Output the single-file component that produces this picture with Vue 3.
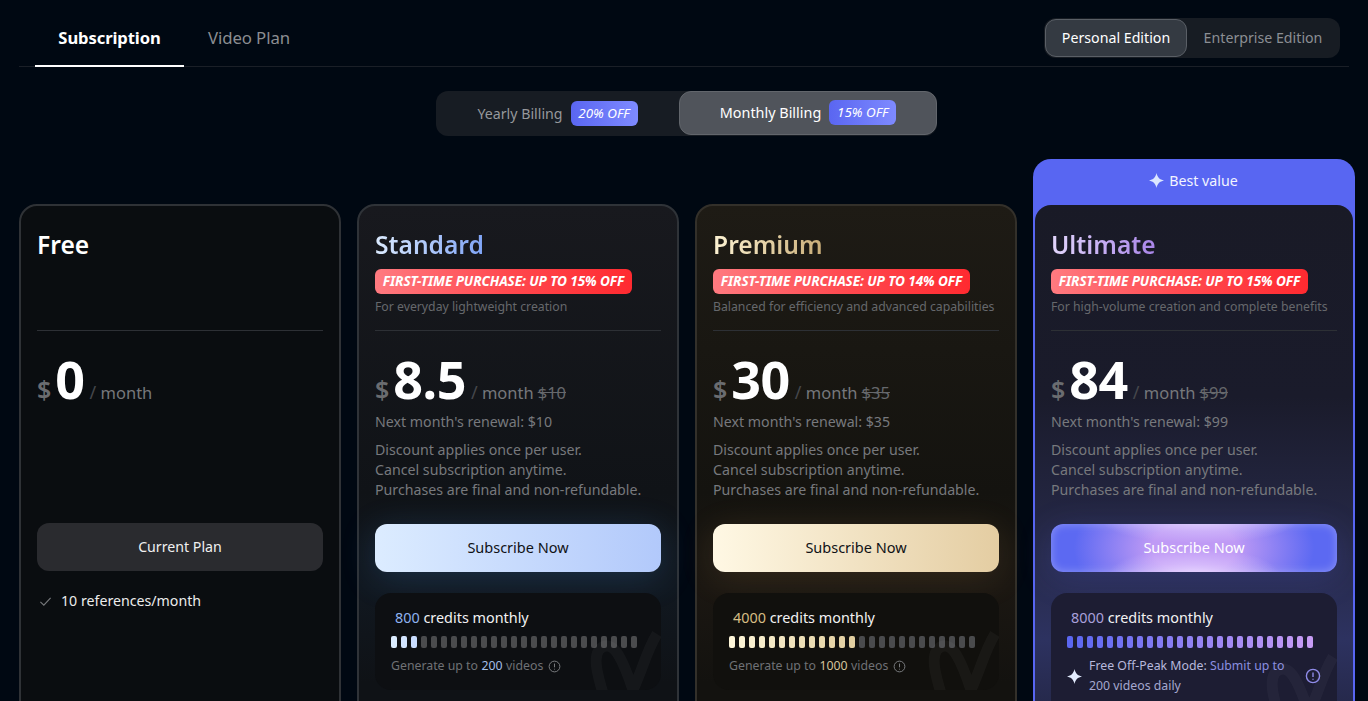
<script setup>
const plans = [
  { key: 'free', name: 'Free', price: '0', feature: '10 references/month' },
  {
    key: 'standard', name: 'Standard', off: 15, desc: 'For everyday lightweight creation', price: '8.5', old: 10,
    credits: 800, filled: 3, from: [219, 236, 255], to: [200, 220, 255], videos: 200,
  },
  {
    key: 'premium', name: 'Premium', off: 14, desc: 'Balanced for efficiency and advanced capabilities', price: '30', old: 35,
    credits: 4000, filled: 13, from: [253, 245, 216], to: [226, 207, 160], videos: 1000,
  },
  {
    key: 'ultimate', name: 'Ultimate', off: 15, desc: 'For high-volume creation and complete benefits', price: '84', old: 99,
    credits: 8000, filled: 25, from: [91, 103, 241], to: [199, 156, 245], offPeak: true,
  },
]

function barColor(plan, i) {
  if (i >= plan.filled) return '#4a4b4d'
  const t = plan.filled > 1 ? i / (plan.filled - 1) : 0
  const c = plan.from.map((v, k) => Math.round(v + (plan.to[k] - v) * t))
  return `rgb(${c.join(',')})`
}
</script>

<template>
  <div class="page">
    <header class="topbar">
      <nav class="tabs">
        <a class="tab active">Subscription</a>
        <a class="tab">Video Plan</a>
      </nav>
      <div class="edition">
        <span class="edition-item on">Personal Edition</span>
        <span class="edition-item">Enterprise Edition</span>
      </div>
    </header>

    <div class="billing">
      <div class="bill yearly">
        <span>Yearly Billing</span><em class="off">20% OFF</em>
      </div>
      <div class="bill monthly">
        <span>Monthly Billing</span><em class="off">15% OFF</em>
      </div>
    </div>

    <section class="plans">
      <article v-for="p in plans" :key="p.key" class="plan" :class="p.key">
        <div v-if="p.key === 'ultimate'" class="ribbon">
          <svg class="ribbon-star" viewBox="0 0 16 16"><path d="M8 0C8.9 4.6 11.4 7.1 16 8 11.4 8.9 8.9 11.4 8 16 7.1 11.4 4.6 8.9 0 8 4.6 7.1 7.1 4.6 8 0Z" /></svg>
          <span>Best value</span>
        </div>
        <div class="inner">
          <div class="head">
            <h2 class="name">{{ p.name }}</h2>
            <template v-if="p.off">
              <div class="promo">FIRST-TIME PURCHASE: UP TO {{ p.off }}% OFF</div>
              <p class="desc">{{ p.desc }}</p>
            </template>
          </div>

          <div class="price">
            <span class="cur">$</span><span class="num">{{ p.price }}</span>
            <span class="per"><i>/</i> month</span>
            <s v-if="p.old" class="old">${{ p.old }}</s>
          </div>

          <div class="terms">
            <template v-if="p.off">
              <p class="next">Next month's renewal: ${{ p.old }}</p>
              <p class="rules">Discount applies once per user.<br />Cancel subscription anytime.<br />Purchases are final and non-refundable.</p>
            </template>
          </div>

          <button class="cta">{{ p.key === 'free' ? 'Current Plan' : 'Subscribe Now' }}</button>

          <div v-if="p.feature" class="feature">
            <svg class="check" viewBox="0 0 14 14"><path d="M1.5 7.5 5.2 11 12.5 3.2" /></svg>
            <span>{{ p.feature }}</span>
          </div>

          <div v-else class="credits">
            <svg class="mark" viewBox="0 0 70 60"><path d="M14 70C6 44 2 28 8 20 14 13 22 15 28 26 34 36 38 48 42 60 52 38 56 20 66 4" /></svg>
            <div class="credit-line"><b>{{ p.credits }}</b> credits monthly</div>
            <div class="bars">
              <i v-for="n in 25" :key="n" :style="{ background: barColor(p, n - 1) }"></i>
            </div>
            <div v-if="p.offPeak" class="peak">
              <svg class="peak-star" viewBox="0 0 16 16"><path d="M8 0C8.9 4.6 11.4 7.1 16 8 11.4 8.9 8.9 11.4 8 16 7.1 11.4 4.6 8.9 0 8 4.6 7.1 7.1 4.6 8 0Z" /></svg>
              <span class="peak-text">Free Off-Peak Mode: <u>Submit up to</u><br /><u>200 videos daily</u></span>
              <svg class="info big" viewBox="0 0 16 16"><circle cx="8" cy="8" r="6.6" /><path d="M8 4.4V9M8 10.8v1" /></svg>
            </div>
            <div v-else class="gen">
              Generate up to <b>{{ p.videos }}</b> videos
              <svg class="info" viewBox="0 0 16 16"><circle cx="8" cy="8" r="6.6" /><path d="M8 4.4V9M8 10.8v1" /></svg>
            </div>
          </div>
        </div>
      </article>
    </section>
  </div>
</template>

<style>
html, body { margin: 0; background: #000812; overflow: hidden; }
</style>

<style scoped>
* { box-sizing: border-box; }
.page {
  height: 701px;
  overflow: hidden;
  background: #000812;
  padding: 0 19px;
  font-family: "Noto Sans", "Open Sans", sans-serif;
  color: #fff;
}
.topbar {
  height: 67px;
  border-bottom: 1px solid #1a1f27;
  display: flex;
  justify-content: space-between;
  padding: 18px 9px 0 16px;
}
.tabs { display: flex; }
.tab {
  width: 149px;
  height: 49px;
  display: flex;
  align-items: center;
  justify-content: center;
  padding-bottom: 9px;
  font-size: 16.6px;
  color: #8b8d91;
  letter-spacing: -0.1px;
}
.tab + .tab { width: 131px; padding: 0 0 11px 24px; justify-content: flex-start; font-size: 16.8px; }
.tab.active { color: #fff; font-weight: 700; border-bottom: 2px solid #fff; }
.edition {
  width: 296px;
  height: 40px;
  background: #171c23;
  border-radius: 12px;
  display: flex;
  align-items: center;
  padding: 0 1px;
  font-size: 14.2px;
}
.edition-item { flex: 1; text-align: center; color: #8b8e93; padding-bottom: 2px; }
.edition-item.on {
  flex: 0 0 142px;
  height: 38px;
  line-height: 35px;
  padding-bottom: 0;
  color: #fff;
  background: #343a42;
  border: 1px solid #5a5f66;
  border-radius: 11px;
}
.billing {
  width: 501px;
  height: 45px;
  margin: 24px 0 0 417px;
  background: #171c23;
  border-radius: 12px;
  display: flex;
  font-size: 14.2px;
}
.bill { display: flex; align-items: center; justify-content: center; gap: 8px; color: #96989c; padding-bottom: 1px; }
.yearly { width: 243px; }
.monthly {
  flex: 1;
  font-size: 14.4px;
  color: #fff;
  background: #50545b;
  border: 1px solid #62666c;
  border-radius: 12px;
  height: 44px;
}
.off {
  width: 67px;
  height: 25px;
  line-height: 25px;
  text-align: center;
  border-radius: 6px;
  color: #fff;
  font-size: 13.4px;
  background: linear-gradient(90deg, #5a66f1, #7e8aff);
}
.plans {
  margin-top: 23px;
  display: grid;
  grid-template-columns: repeat(4, 322px);
  gap: 16px;
}
.plan { height: 640px; margin-top: 45px; border-radius: 18px; }
.inner {
  height: 100%;
  border: 2px solid #2f3236;
  border-radius: 18px;
  padding: 0 16px;
}
.free .inner { background: #0a0d10; }
.standard .inner { background: linear-gradient(180deg, #18191e 0, #101317 45%, #111820 60%, #0f1216 75%); border-color: #2f3338; }
.premium .inner { background: linear-gradient(180deg, #1e1b15 0, #14130f 45%, #1b1712 60%, #13120f 75%); border-color: #33302a; }
.ultimate {
  margin-top: 0;
  height: 685px;
  background: #5866f2;
  border-radius: 18px 18px 0 0;
  padding: 0 2px;
}
.ultimate .inner {
  height: 639px;
  border: 0;
  border-radius: 16px;
  background: linear-gradient(180deg, #191a26 0, #1a1b2b 30%, #272a4a 55%, #2d3260 68%, #1d1e33 90%);
}
.ultimate .head { height: 126px; padding-top: 24px; }
.ribbon {
  height: 46px;
  display: flex;
  align-items: center;
  justify-content: center;
  gap: 5px;
  font-size: 14.2px;
  padding: 0 1px 4px 0;
  color: #f2f4ff;
}
.ribbon-star { width: 15px; height: 15px; fill: #dbe6ff; }
.head {
  height: 125px;
  padding-top: 23px;
  border-bottom: 1px solid #2d3035;
}
.name {
  margin: 0;
  font-size: 24.6px;
  line-height: 32px;
  font-weight: 600;
  width: max-content;
  color: #fff;
}
.standard .name { background: linear-gradient(90deg, #dbeafe, #7fa4f6); -webkit-background-clip: text; background-clip: text; color: transparent; }
.premium .name { background: linear-gradient(90deg, #fdf3d3, #c9ad78); -webkit-background-clip: text; background-clip: text; color: transparent; }
.ultimate .name { background: linear-gradient(90deg, #e2d6fc, #a884e8); -webkit-background-clip: text; background-clip: text; color: transparent; }
.promo {
  margin-top: 8px;
  width: 257px;
  height: 25px;
  line-height: 24px;
  text-align: center;
  white-space: nowrap;
  border-radius: 6px;
  font-size: 13.6px;
  font-weight: 700;
  font-style: italic;
  letter-spacing: -0.1px;
  background: linear-gradient(90deg, #ff7a80, #ff4a50 50%, #ff2a30);
}
.desc { margin: 5px 0 0; font-size: 12.25px; line-height: 16px; color: #66686c; white-space: nowrap; }
.price {
  margin-top: 19px;
  height: 60px;
  display: flex;
  align-items: baseline;
  white-space: nowrap;
  line-height: 58px;
}
.cur { font-size: 25px; font-weight: 600; color: #6a6c70; margin-right: 4px; }
.num { font-size: 52px; font-weight: 700; color: #fff; margin-right: 5px; letter-spacing: -0.5px; }
.per { font-size: 16.5px; color: #76787c; margin-right: 4px; }
.per i { font-style: normal; color: #45474b; font-size: 18px; }
.old { font-size: 16.5px; color: #66686c; }
.terms { height: 90px; padding-top: 2px; }
.next { margin: 0; font-size: 14.2px; line-height: 20px; color: #77797d; }
.rules { margin: 8px 0 0; font-size: 14.2px; line-height: 20px; color: #77797d; white-space: nowrap; }
.cta {
  display: block;
  position: relative;
  z-index: 1;
  width: 100%;
  height: 48px;
  margin-top: 24px;
  padding: 0 0 2px;
  border: 0;
  border-radius: 12px;
  font: inherit;
  font-size: 14.5px;
  color: #101216;
}
.free .cta { margin-top: 23px; background: #2a2b2f; color: #f0f0f0; font-size: 14.2px; }
.standard .cta { background: linear-gradient(90deg, #dcecff, #b2c9fb); box-shadow: 0 6px 34px rgba(70, 140, 220, .22); }
.premium .cta { background: linear-gradient(90deg, #fff8e4, #e4cda2); box-shadow: 0 6px 34px rgba(200, 150, 80, .16); }
.ultimate .cta {
  color: #fff;
  background:
    radial-gradient(ellipse 30% 55% at 50% 105%, #e2ccff 0, rgba(226, 204, 255, 0) 100%),
    radial-gradient(ellipse 34% 45% at 52% -5%, #d6c2fd 0, rgba(214, 194, 253, 0) 100%),
    radial-gradient(ellipse 42% 150% at 50% 50%, #bf9af5 35%, #5c69f2 100%);
  box-shadow: inset 0 0 10px rgba(255, 255, 255, .3), 0 6px 34px rgba(90, 100, 240, .2);
}
.feature { display: flex; align-items: center; gap: 9px; margin-top: 20px; padding-left: 2px; font-size: 14.2px; line-height: 20px; color: #ececec; }
.check { width: 13px; height: 13px; fill: none; stroke: #77797c; stroke-width: 1.2; }
.credits {
  position: relative;
  z-index: 1;
  height: 97px;
  margin-top: 21px;
  padding: 15px 16px 0;
  border-radius: 16px;
  overflow: hidden;
  background: #0d0f12;
}
.premium .credits { background: #11100d; }
.ultimate .credits { height: 130px; background: #1d1d33; }
.mark {
  position: absolute;
  right: 0;
  top: 37px;
  width: 70px;
  height: 60px;
  fill: none;
  stroke: rgba(255, 255, 255, .035);
  stroke-width: 11;
  overflow: visible;
  stroke-linejoin: round;
}
.ultimate .mark { top: 60px; }
.credit-line { font-size: 14.4px; line-height: 20px; padding-left: 4px; color: #f2f2f2; }
.credit-line b { font-weight: 400; }
.standard .credit-line b { color: #8fb2ef; }
.standard .gen b { color: #a4bfe8; font-weight: 400; }
.premium .credit-line b { color: #d6bd84; }
.premium .gen b { color: #d6c69c; font-weight: 400; }
.ultimate .credit-line b { color: #a9a0db; }
.bars { display: flex; gap: 4px; margin-top: 8px; }
.bars i { width: 6px; height: 12px; border-radius: 2px; }
.gen {
  display: flex;
  align-items: center;
  gap: 3.5px;
  margin-top: 10px;
  font-size: 12.3px;
  line-height: 16px;
  color: #6f7175;
}
.info { width: 13px; height: 13px; margin-left: 1px; fill: none; stroke: #7b7d81; stroke-width: 1.2; }
.info.big { width: 16px; height: 16px; stroke: #8f8be8; stroke-width: 1.4; position: absolute; right: 16px; top: 75px; }
.peak { display: flex; align-items: flex-start; gap: 7px; margin-top: 8px; font-size: 12.3px; line-height: 20px; color: #b6b8dc; }
.peak-star { width: 15px; height: 15px; fill: #e3ecff; margin-top: 13px; flex: none; }
.peak-text { white-space: nowrap; }
.peak-text u { text-decoration: none; color: #8b8fe0; }
.peak-text br + u { color: #a5a8cf; }
</style>
